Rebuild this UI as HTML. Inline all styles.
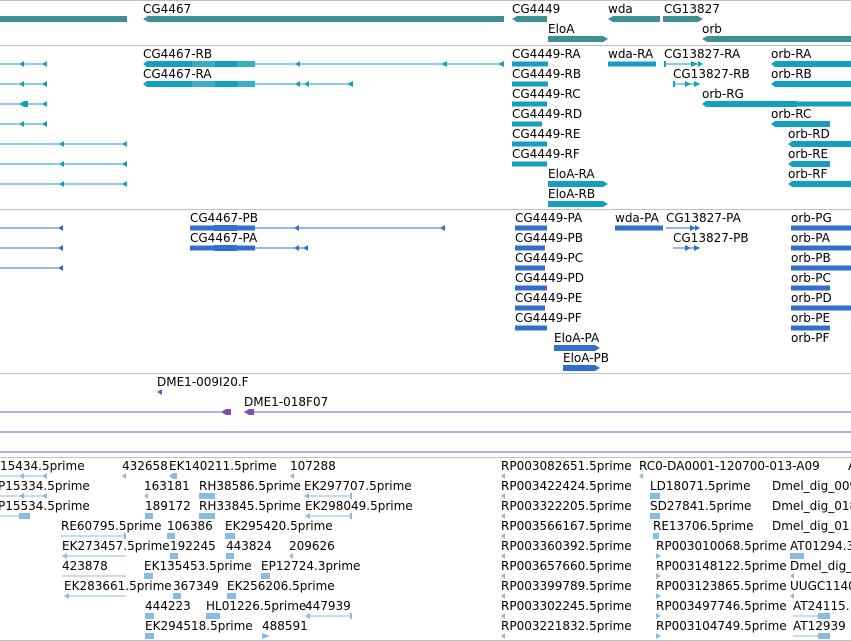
<!DOCTYPE html>
<html><head><meta charset="utf-8"><style>
html,body{margin:0;padding:0;background:#fff;width:851px;height:641px;overflow:hidden}
svg{display:block}
text{font-family:"DejaVu Sans","Liberation Sans",sans-serif;font-size:12px;fill:#000}
</style></head><body>
<svg width="851" height="641" viewBox="0 0 851 641">
<g stroke="#c0c0c0" stroke-width="1">
<line x1="0" y1="0.5" x2="851" y2="0.5"/><line x1="0" y1="45.5" x2="851" y2="45.5"/>
<line x1="0" y1="209.5" x2="851" y2="209.5"/><line x1="0" y1="373.5" x2="851" y2="373.5"/>
<line x1="0" y1="457.5" x2="851" y2="457.5"/><line x1="0" y1="640.5" x2="851" y2="640.5"/>
</g>
<!-- genes -->
<g fill="#3f9093">
<rect x="0" y="16" width="127" height="6"/>
<polygon points="143,19 148,16 504,16 504,22 148,22"/>
<polygon points="512,19 517,16 547,16 547,22 517,22"/>
<polygon points="608,19 613,16 660,16 660,22 613,22"/>
<polygon points="663,16 698,16 703,19 698,22 663,22"/>
<polygon points="548,36 603,36 608,39 603,42 548,42"/>
<polygon points="702,39 707,36 851,36 851,42 707,42"/>
</g>
<text x="143" y="13">CG4467</text><text x="512" y="13">CG4449</text><text x="608" y="13">wda</text><text x="664" y="13">CG13827</text>
<text x="548" y="33">EloA</text><text x="702" y="33">orb</text>

<!-- transcripts -->
<g fill="#139fc0" stroke="none">
<!-- left lines -->
<rect x="0" y="63.5" width="47" height="1"/><rect x="0" y="83.5" width="47" height="1"/><rect x="0" y="103.5" width="47" height="1"/><rect x="0" y="123.5" width="47" height="1"/>
<rect x="0" y="143.5" width="127" height="1"/><rect x="0" y="163.5" width="127" height="1"/><rect x="0" y="183.5" width="127" height="1"/>
<polygon points="19,64 24,61 24,67"/><polygon points="42,64 47,61 47,67"/>
<polygon points="19,84 24,81 24,87"/><polygon points="42,84 47,81 47,87"/>
<polygon points="19,104 24,101 28,101 28,107 24,107"/><polygon points="42,104 47,101 47,107"/>
<polygon points="19,124 24,121 24,127"/><polygon points="42,124 47,121 47,127"/>
<polygon points="59,144 64,141 64,147"/><polygon points="122,144 127,141 127,147"/>
<polygon points="59,164 64,161 64,167"/><polygon points="122,164 127,161 127,167"/>
<polygon points="59,184 64,181 64,187"/><polygon points="122,184 127,181 127,187"/>
<!-- CG4467-RB -->
<polygon points="143,64 147,61 192,61 192,67 147,67"/><rect x="192" y="61" width="63" height="6" opacity="0.85"/><rect x="215" y="61" width="22" height="6"/>
<rect x="255" y="63.5" width="249" height="1"/><polygon points="295,64 300,61 300,67"/><polygon points="441,64 447,61 447,67"/><polygon points="498,64 504,61 504,67"/>
<!-- CG4467-RA -->
<polygon points="143,84 147,81 192,81 192,87 147,87"/><rect x="192" y="81" width="63" height="6" opacity="0.85"/><rect x="215" y="81" width="22" height="6"/>
<rect x="255" y="83.5" width="98" height="1"/><polygon points="295,84 300,81 300,87"/><polygon points="304,84 309,81 309,87"/><polygon points="347,84 353,81 353,87"/>
<!-- CG4449 -->
<rect x="512" y="61.5" width="36" height="5"/><rect x="512" y="81.5" width="36" height="5"/><rect x="512" y="101.5" width="35" height="5"/>
<rect x="512" y="121.5" width="30" height="5"/><rect x="512" y="141.5" width="35" height="5"/><rect x="512" y="161.5" width="35" height="5"/>
<!-- wda -->
<rect x="608" y="61.5" width="48" height="5"/>
<!-- CG13827 -->
<rect x="664" y="63.5" width="35" height="1"/><polygon points="691,61 698,64 691,67"/><polygon points="698,61 703,64 698,67"/><rect x="664" y="61" width="2" height="6"/>
<rect x="673" y="83.5" width="27" height="1"/><polygon points="685,81 691,84 685,87"/><polygon points="694,81 700,84 694,87"/><rect x="673" y="81" width="2" height="6"/>
<!-- orb -->
<polygon points="771,64 775,61 851,61 851,67 775,67"/><polygon points="771,84 775,81 851,81 851,87 775,87"/>
<polygon points="702,104 706,101 797,101 797,107 706,107"/><rect x="797" y="101.5" width="54" height="5"/>
<polygon points="771,124 775,121 830,121 830,127 775,127"/>
<polygon points="788,144 792,141 851,141 851,147 792,147"/><polygon points="788,164 792,161 830,161 830,167 792,167"/>
<polygon points="788,184 792,181 851,181 851,187 792,187"/>
<!-- EloA -->
<polygon points="548,181 603,181 608,184 603,187 548,187"/><polygon points="548,201 603,201 608,204 603,207 548,207"/>
</g>
<text x="143" y="58">CG4467-RB</text><text x="512" y="58">CG4449-RA</text><text x="608" y="58">wda-RA</text><text x="664" y="58">CG13827-RA</text><text x="771" y="58">orb-RA</text>
<text x="143" y="78">CG4467-RA</text><text x="512" y="78">CG4449-RB</text><text x="673" y="78">CG13827-RB</text><text x="771" y="78">orb-RB</text>
<text x="512" y="98">CG4449-RC</text><text x="702" y="98">orb-RG</text>
<text x="512" y="118">CG4449-RD</text><text x="771" y="118">orb-RC</text>
<text x="512" y="138">CG4449-RE</text><text x="788" y="138">orb-RD</text>
<text x="512" y="158">CG4449-RF</text><text x="788" y="158">orb-RE</text>
<text x="548" y="178">EloA-RA</text><text x="788" y="178">orb-RF</text>
<text x="548" y="198">EloA-RB</text>

<!-- proteins -->
<g fill="#306fce">
<rect x="0" y="227.5" width="63" height="1"/><polygon points="58,228 63,225 63,231"/>
<rect x="0" y="247.5" width="63" height="1"/><polygon points="58,248 63,245 63,251"/>
<rect x="0" y="267.5" width="63" height="1"/><polygon points="58,268 63,265 63,271"/>
<rect x="190" y="225.5" width="65" height="5"/><rect x="214" y="225" width="23" height="6"/><rect x="255" y="227.5" width="190" height="1"/><polygon points="294,228 299,225 299,231"/><polygon points="440,228 445,225 445,231"/>
<rect x="190" y="245.5" width="65" height="5"/><rect x="214" y="245" width="23" height="6"/><rect x="255" y="247.5" width="53" height="1"/><polygon points="294,248 299,245 299,251"/><polygon points="303,248 308,245 308,251"/>
<rect x="515" y="225.5" width="32" height="5"/><rect x="515" y="245.5" width="30" height="5"/><rect x="515" y="265.5" width="30" height="5"/>
<rect x="515" y="285.5" width="32" height="5"/><rect x="515" y="305.5" width="30" height="5"/><rect x="515" y="325.5" width="32" height="5"/>
<rect x="615" y="225.5" width="48" height="5"/>
<rect x="666" y="227.5" width="33" height="1"/><polygon points="690,225 696,228 690,231"/><polygon points="695,225 700,228 695,231"/>
<rect x="673" y="247.5" width="27" height="1"/><polygon points="685,245 691,248 685,251"/><polygon points="694,245 700,248 694,251"/>
<rect x="791" y="225.5" width="60" height="5"/><rect x="791" y="245.5" width="60" height="5"/><rect x="791" y="265.5" width="60" height="5"/>
<rect x="791" y="285.5" width="39" height="5"/><rect x="791" y="305.5" width="60" height="5"/><rect x="791" y="325.5" width="39" height="5"/>
<polygon points="554,345 595,345 600,348 595,351 554,351"/><polygon points="563,365 595,365 600,368 595,371 563,371"/>
</g>
<text x="190" y="222">CG4467-PB</text><text x="515" y="222">CG4449-PA</text><text x="615" y="222">wda-PA</text><text x="666" y="222">CG13827-PA</text><text x="791" y="222">orb-PG</text>
<text x="190" y="242">CG4467-PA</text><text x="515" y="242">CG4449-PB</text><text x="673" y="242">CG13827-PB</text><text x="791" y="242">orb-PA</text>
<text x="515" y="262">CG4449-PC</text><text x="791" y="262">orb-PB</text>
<text x="515" y="282">CG4449-PD</text><text x="791" y="282">orb-PC</text>
<text x="515" y="302">CG4449-PE</text><text x="791" y="302">orb-PD</text>
<text x="515" y="322">CG4449-PF</text><text x="791" y="322">orb-PE</text>
<text x="554" y="342">EloA-PA</text><text x="791" y="342">orb-PF</text>
<text x="563" y="362">EloA-PB</text>

<!-- DME1 -->
<g fill="#7952b3">
<polygon points="157,392 162,389 162,395"/>
<rect x="0" y="411.5" width="231" height="1"/><polygon points="221,412 226,409 231,409 231,415 226,415"/>
<rect x="244" y="411.5" width="607" height="1"/><polygon points="244,412 249,409 254,409 254,415 249,415"/>
<rect x="0" y="431.5" width="851" height="1"/><rect x="0" y="451.5" width="851" height="1"/>
</g>
<text x="157" y="386">DME1-009I20.F</text><text x="244" y="406">DME1-018F07</text>

<!-- ESTs -->
<g fill="#86bde2">
<rect x="0" y="475.5" width="47" height="1"/><polygon points="19,476 24,473 24,479"/><polygon points="42,476 47,473 47,479"/>
<polygon points="122,476 126,473 126,479"/><polygon points="169,476 173,473 177,473 177,479 173,479"/><polygon points="290,476 294,473 294,479"/>
<polygon points="501,476 505,473 505,479"/><polygon points="639,476 643,473 643,479"/>
<rect x="0" y="495.5" width="47" height="1"/><polygon points="19,496 24,493 24,499"/><polygon points="42,496 47,493 47,499"/>
<polygon points="144,496 148,493 148,499"/><rect x="199" y="493" width="16" height="6"/><rect x="304" y="495.5" width="48" height="1"/><polygon points="304,496 309,493 309,499"/><rect x="350" y="493" width="2" height="6"/>
<polygon points="501,516 505,513 505,519"/><polygon points="501,496 505,493 505,499"/><rect x="650" y="493" width="10" height="6"/>
<rect x="0" y="515.5" width="30" height="1"/><rect x="19" y="513" width="11" height="6"/><rect x="145" y="513" width="8" height="6"/><rect x="199" y="513" width="16" height="6"/>
<rect x="305" y="515.5" width="47" height="1"/><polygon points="305,516 310,513 310,519"/><rect x="350" y="513" width="2" height="6"/><rect x="650" y="513" width="10" height="6"/>
<rect x="61" y="535.5" width="65" height="1"/><rect x="124" y="533" width="2" height="6"/><rect x="167" y="533" width="8" height="6"/><rect x="225" y="533" width="10" height="6"/><polygon points="501,536 505,533 505,539"/><rect x="653" y="533" width="6" height="6"/>
<rect x="62" y="555.5" width="64" height="1"/><polygon points="62,556 67,553 67,559"/><rect x="170" y="553" width="8" height="6"/><rect x="226" y="553" width="8" height="6"/><polygon points="289,556 293,553 293,559"/><polygon points="501,556 505,553 505,559"/><polygon points="656,553 661,556 656,559"/><rect x="790" y="553" width="14" height="6"/>
<rect x="62" y="575.5" width="64" height="1"/><rect x="144" y="573" width="9" height="6"/><rect x="261" y="573" width="9" height="6"/><polygon points="501,576 505,573 505,579"/><polygon points="656,573 661,576 656,579"/><polygon points="790,576 794,573 794,579"/>
<rect x="64" y="595.5" width="62" height="1"/><polygon points="64,596 69,593 69,599"/><rect x="173" y="593" width="8" height="6"/><rect x="227" y="593" width="9" height="6"/><polygon points="501,596 505,593 505,599"/><polygon points="656,593 661,596 656,599"/><polygon points="790,596 794,593 794,599"/>
<rect x="145" y="613" width="9" height="6"/><rect x="206" y="613" width="14" height="6"/><rect x="305" y="615.5" width="47" height="1"/><polygon points="305,616 310,613 310,619"/><rect x="350" y="613" width="2" height="6"/><polygon points="501,616 505,613 505,619"/><polygon points="656,613 661,616 656,619"/><rect x="793" y="615.5" width="37" height="1"/><rect x="818" y="613" width="12" height="6"/>
<rect x="145" y="633" width="9" height="6"/><polygon points="262,633 270,636 262,639"/><polygon points="501,636 505,633 505,639"/><polygon points="656,633 661,636 656,639"/><rect x="793" y="635.5" width="37" height="1"/><rect x="818" y="633" width="12" height="6"/>
</g>
<text x="0" y="470">15434.5prime</text><text x="122" y="470">432658</text><text x="169" y="470">EK140211.5prime</text><text x="290" y="470">107288</text><text x="501" y="470">RP003082651.5prime</text><text x="639" y="470">RC0-DA0001-120700-013-A09</text><text x="848" y="470">A</text>
<text x="-2" y="490">P15334.5prime</text><text x="144" y="490">163181</text><text x="199" y="490">RH38586.5prime</text><text x="304" y="490">EK297707.5prime</text><text x="501" y="490">RP003422424.5prime</text><text x="650" y="490">LD18071.5prime</text><text x="772" y="490">Dmel_dig_009</text>
<text x="-2" y="510">P15534.5prime</text><text x="145" y="510">189172</text><text x="199" y="510">RH33845.5prime</text><text x="305" y="510">EK298049.5prime</text><text x="501" y="510">RP003322205.5prime</text><text x="650" y="510">SD27841.5prime</text><text x="772" y="510">Dmel_dig_018</text>
<text x="61" y="530">RE60795.5prime</text><text x="167" y="530">106386</text><text x="225" y="530">EK295420.5prime</text><text x="501" y="530">RP003566167.5prime</text><text x="653" y="530">RE13706.5prime</text><text x="772" y="530">Dmel_dig_011</text>
<text x="62" y="550">EK273457.5prime</text><text x="170" y="550">192245</text><text x="226" y="550">443824</text><text x="289" y="550">209626</text><text x="501" y="550">RP003360392.5prime</text><text x="656" y="550">RP003010068.5prime</text><text x="790" y="550">AT01294.3</text>
<text x="62" y="570">423878</text><text x="144" y="570">EK135453.5prime</text><text x="261" y="570">EP12724.3prime</text><text x="501" y="570">RP003657660.5prime</text><text x="656" y="570">RP003148122.5prime</text><text x="790" y="570">Dmel_dig_</text>
<text x="64" y="590">EK283661.5prime</text><text x="173" y="590">367349</text><text x="227" y="590">EK256206.5prime</text><text x="501" y="590">RP003399789.5prime</text><text x="656" y="590">RP003123865.5prime</text><text x="790" y="590">UUGC1140</text>
<text x="145" y="610">444223</text><text x="206" y="610">HL01226.5prime</text><text x="305" y="610">447939</text><text x="501" y="610">RP003302245.5prime</text><text x="656" y="610">RP003497746.5prime</text><text x="793" y="610">AT24115.</text>
<text x="145" y="630">EK294518.5prime</text><text x="262" y="630">488591</text><text x="501" y="630">RP003221832.5prime</text><text x="656" y="630">RP003104749.5prime</text><text x="793" y="630">AT12939</text>
</svg>
</body></html>
